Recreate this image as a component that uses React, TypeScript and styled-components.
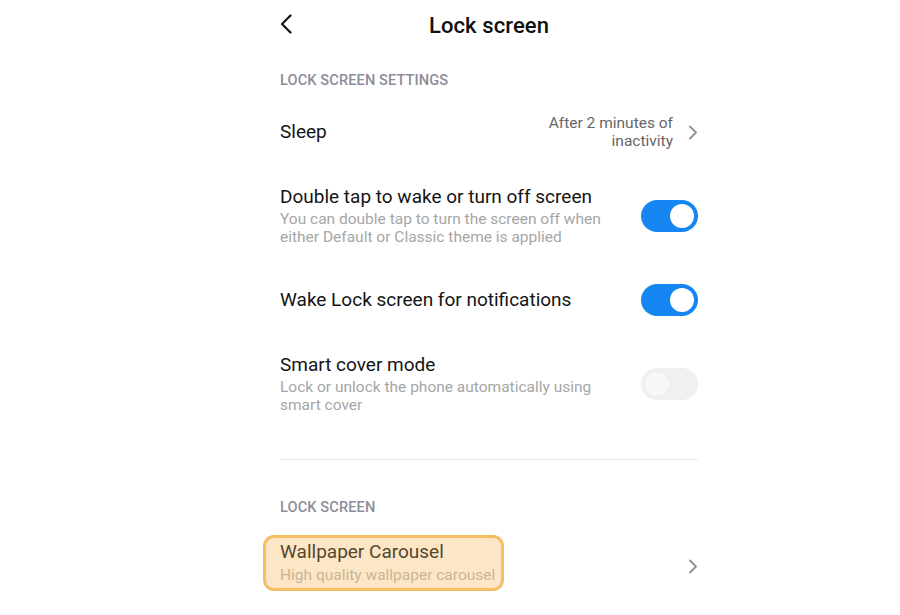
import React from 'react';
import styled, { createGlobalStyle } from 'styled-components';

const GlobalStyle = createGlobalStyle`
  html, body {
    margin: 0;
    padding: 0;
    background: #ffffff;
    font-family: Roboto, "Noto Sans", Arial, sans-serif;
  }
`;

const Page = styled.div`
  width: 900px;
  height: 615px;
  overflow: hidden;
  background: #ffffff;
`;

const Screen = styled.div`
  width: 454px;
  margin-left: 262px;
  padding: 0 18px;
  box-sizing: border-box;
  display: flex;
  flex-direction: column;
`;

const Header = styled.div`
  height: 50px;
  display: flex;
  align-items: center;
`;

const BackButton = styled.div`
  width: 14px;
  height: 20px;
  display: flex;
  align-items: center;
  margin-top: -2px;
`;

const Title = styled.h1`
  flex: 1;
  margin: 0 14px 0 0;
  text-align: center;
  font-size: 22px;
  font-weight: 500;
  color: #111111;
  letter-spacing: 0.1px;
`;

const SectionTitle = styled.div<{ $top: number }>`
  padding-top: ${p => p.$top}px;
  line-height: 20px;
  font-size: 14.6px;
  font-weight: 500;
  color: #8d8d9a;
  letter-spacing: 0.1px;
`;

const Row = styled.div<{ $height?: number }>`
  height: ${p => p.$height ?? 84}px;
  display: flex;
  align-items: center;
  justify-content: space-between;
  gap: 24px;
`;

const TextBlock = styled.div`
  display: flex;
  flex-direction: column;
  min-width: 0;
`;

const RowTitle = styled.div`
  font-size: 19px;
  line-height: 22px;
  color: #141414;
`;

const RowDesc = styled.div`
  margin-top: 2px;
  font-size: 15.5px;
  line-height: 18px;
  color: #a6a6a6;
`;

const ValueGroup = styled.div`
  display: flex;
  align-items: center;
  gap: 15px;
`;

const Value = styled.div`
  text-align: right;
  font-size: 15.5px;
  line-height: 18px;
  color: #666666;
`;

const ChevronWrap = styled.div<{ $offset?: number }>`
  display: flex;
  align-items: center;
  margin-top: ${p => p.$offset ?? 0}px;
`;

const Toggle = styled.div<{ $on: boolean }>`
  flex-shrink: 0;
  width: 57px;
  height: 32px;
  border-radius: 16px;
  box-sizing: border-box;
  padding: 4px;
  display: flex;
  justify-content: ${p => (p.$on ? 'flex-end' : 'flex-start')};
  background: ${p => (p.$on ? '#1686f2' : '#f0f0f0')};
`;

const Knob = styled.div<{ $on: boolean }>`
  width: 24px;
  height: 24px;
  border-radius: 50%;
  background: ${p => (p.$on ? '#ffffff' : '#f8f8f8')};
  box-shadow: ${p => (p.$on ? 'none' : '0 0 0 1px #ebebeb')};
`;

const Divider = styled.div`
  margin-top: 33px;
  height: 1px;
  background: #e8e8e8;
`;

const Highlight = styled.div`
  margin-left: -17px;
  padding: 3px 6px 4px 14px;
  border: 3px solid #f6bd62;
  border-radius: 11px;
  background: #fde6c5;
  display: flex;
  flex-direction: column;
`;

const HighlightTitle = styled(RowTitle)`
  color: #54462f;
`;

const HighlightDesc = styled(RowDesc)`
  margin-top: 3px;
  color: #c8b597;
`;

const BackIcon = () => (
  <svg width="12" height="20" viewBox="0 0 12 20">
    <path d="M10.5 1.5 L2 10 L10.5 18.5" fill="none" stroke="#111" strokeWidth="2.2" strokeLinecap="round" strokeLinejoin="round" />
  </svg>
);

const ChevronRight = () => (
  <svg width="10" height="15" viewBox="0 0 10 15">
    <path d="M2 1.5 L8 7.5 L2 13.5" fill="none" stroke="#8f8f8f" strokeWidth="1.8" strokeLinecap="round" strokeLinejoin="round" />
  </svg>
);

const Switch = ({ on }: { on: boolean }) => (
  <Toggle $on={on}>
    <Knob $on={on} />
  </Toggle>
);

export default function App() {
  return (
    <Page>
      <GlobalStyle />
      <Screen>
        <Header>
          <BackButton>
            <BackIcon />
          </BackButton>
          <Title>Lock screen</Title>
        </Header>

        <SectionTitle $top={20}>LOCK SCREEN SETTINGS</SectionTitle>

        <Row>
          <RowTitle>Sleep</RowTitle>
          <ValueGroup>
            <Value>
              After 2 minutes of
              <br />
              inactivity
            </Value>
            <ChevronRight />
          </ValueGroup>
        </Row>

        <Row>
          <TextBlock>
            <RowTitle>Double tap to wake or turn off screen</RowTitle>
            <RowDesc>
              You can double tap to turn the screen off when
              <br />
              either Default or Classic theme is applied
            </RowDesc>
          </TextBlock>
          <Switch on />
        </Row>

        <Row>
          <RowTitle>Wake Lock screen for notifications</RowTitle>
          <Switch on />
        </Row>

        <Row>
          <TextBlock>
            <RowTitle>Smart cover mode</RowTitle>
            <RowDesc>
              Lock or unlock the phone automatically using
              <br />
              smart cover
            </RowDesc>
          </TextBlock>
          <Switch on={false} />
        </Row>

        <Divider />

        <SectionTitle $top={37}>LOCK SCREEN</SectionTitle>

        <Row $height={92}>
          <Highlight>
            <HighlightTitle>Wallpaper Carousel</HighlightTitle>
            <HighlightDesc>High quality wallpaper carousel</HighlightDesc>
          </Highlight>
          <ChevronWrap $offset={7}>
            <ChevronRight />
          </ChevronWrap>
        </Row>
      </Screen>
    </Page>
  );
}
